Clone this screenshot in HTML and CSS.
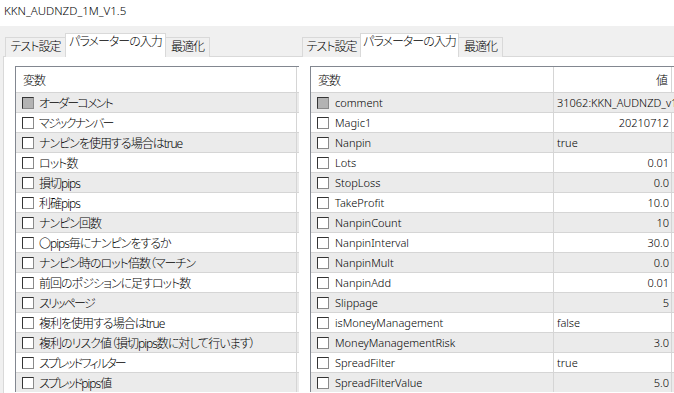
FILE: index.html
```html
<!DOCTYPE html>
<html lang="ja">
  <head>
    <meta charset="UTF-8" />
    <meta name="viewport" content="width=device-width, initial-scale=1.0" />
    <title>KKN_AUDNZD_1M_V1.5</title>
    <link rel="stylesheet" href="styles.css">
  </head>
  <body>
    <div class="title">KKN_AUDNZD_1M_V1.5</div>

    <div class="windows">
      <section class="tester tester-left">
        <div class="tabs">
          <div class="tab tab-test">テスト設定</div>
          <div class="tab tab-params active">パラメーターの入力</div>
          <div class="tab tab-opt">最適化</div>
        </div>
        <div class="panel">
          <div class="list">
            <div class="row head">
              <div class="cell name">変数</div>
              <div class="cell value"></div>
              <div class="cell rest"></div>
            </div>
            <div class="row odd"><div class="cell name"><span class="check mixed"></span><span class="kana">オーダーコメント</span></div><div class="cell value"></div><div class="cell rest"></div></div>
            <div class="row"><div class="cell name"><span class="check"></span><span class="kana">マジックナンバー</span></div><div class="cell value"></div><div class="cell rest"></div></div>
            <div class="row odd"><div class="cell name"><span class="check"></span>ナンピンを使用する場合はtrue</div><div class="cell value"></div><div class="cell rest"></div></div>
            <div class="row"><div class="cell name"><span class="check"></span>ロット数</div><div class="cell value"></div><div class="cell rest"></div></div>
            <div class="row odd"><div class="cell name"><span class="check"></span>損切pips</div><div class="cell value"></div><div class="cell rest"></div></div>
            <div class="row"><div class="cell name"><span class="check"></span>利確pips</div><div class="cell value"></div><div class="cell rest"></div></div>
            <div class="row odd"><div class="cell name"><span class="check"></span>ナンピン回数</div><div class="cell value"></div><div class="cell rest"></div></div>
            <div class="row"><div class="cell name"><span class="check"></span>〇pips毎にナンピンをするか</div><div class="cell value"></div><div class="cell rest"></div></div>
            <div class="row odd"><div class="cell name"><span class="check"></span>ナンピン時のロット倍数（マーチン</div><div class="cell value"></div><div class="cell rest"></div></div>
            <div class="row"><div class="cell name"><span class="check"></span>前回のポジションに足すロット数</div><div class="cell value"></div><div class="cell rest"></div></div>
            <div class="row odd"><div class="cell name"><span class="check"></span><span class="kana">スリッページ</span></div><div class="cell value"></div><div class="cell rest"></div></div>
            <div class="row"><div class="cell name"><span class="check"></span>複利を使用する場合はtrue</div><div class="cell value"></div><div class="cell rest"></div></div>
            <div class="row odd"><div class="cell name"><span class="check"></span>複利のリスク値（損切pips数に対して行います）</div><div class="cell value"></div><div class="cell rest"></div></div>
            <div class="row"><div class="cell name"><span class="check"></span><span class="kana">スプレッドフィルター</span></div><div class="cell value"></div><div class="cell rest"></div></div>
            <div class="row odd"><div class="cell name"><span class="check"></span><span class="kana">スプレッド</span>pips値</div><div class="cell value"></div><div class="cell rest"></div></div>
          </div>
        </div>
      </section>

      <section class="tester tester-right">
        <div class="tabs">
          <div class="tab tab-test">テスト設定</div>
          <div class="tab tab-params active">パラメーターの入力</div>
          <div class="tab tab-opt">最適化</div>
        </div>
        <div class="panel">
          <div class="list">
            <div class="row head">
              <div class="cell name">変数</div>
              <div class="cell value num">値</div>
              <div class="cell rest"></div>
            </div>
            <div class="row odd"><div class="cell name"><span class="check mixed"></span>comment</div><div class="cell value overflow">31062:KKN_AUDNZD_v1.5</div><div class="cell rest"></div></div>
            <div class="row"><div class="cell name"><span class="check"></span>Magic1</div><div class="cell value num">20210712</div><div class="cell rest"></div></div>
            <div class="row odd"><div class="cell name"><span class="check"></span>Nanpin</div><div class="cell value">true</div><div class="cell rest"></div></div>
            <div class="row"><div class="cell name"><span class="check"></span>Lots</div><div class="cell value num">0.01</div><div class="cell rest"></div></div>
            <div class="row odd"><div class="cell name"><span class="check"></span>StopLoss</div><div class="cell value num">0.0</div><div class="cell rest"></div></div>
            <div class="row"><div class="cell name"><span class="check"></span>TakeProfit</div><div class="cell value num">10.0</div><div class="cell rest"></div></div>
            <div class="row odd"><div class="cell name"><span class="check"></span>NanpinCount</div><div class="cell value num">10</div><div class="cell rest"></div></div>
            <div class="row"><div class="cell name"><span class="check"></span>NanpinInterval</div><div class="cell value num">30.0</div><div class="cell rest"></div></div>
            <div class="row odd"><div class="cell name"><span class="check"></span>NanpinMult</div><div class="cell value num">0.0</div><div class="cell rest"></div></div>
            <div class="row"><div class="cell name"><span class="check"></span>NanpinAdd</div><div class="cell value num">0.01</div><div class="cell rest"></div></div>
            <div class="row odd"><div class="cell name"><span class="check"></span>Slippage</div><div class="cell value num">5</div><div class="cell rest"></div></div>
            <div class="row"><div class="cell name"><span class="check"></span>isMoneyManagement</div><div class="cell value">false</div><div class="cell rest"></div></div>
            <div class="row odd"><div class="cell name"><span class="check"></span>MoneyManagementRisk</div><div class="cell value num">3.0</div><div class="cell rest"></div></div>
            <div class="row"><div class="cell name"><span class="check"></span>SpreadFilter</div><div class="cell value">true</div><div class="cell rest"></div></div>
            <div class="row odd"><div class="cell name"><span class="check"></span>SpreadFilterValue</div><div class="cell value num">5.0</div><div class="cell rest"></div></div>
          </div>
        </div>
      </section>
    </div>
  </body>
</html>
```

FILE: styles.css
```css
* {
  margin: 0;
  padding: 0;
  box-sizing: border-box;
}

html,
body {
  width: 674px;
  height: 393px;
  overflow: hidden;
}

body {
  background: #ffffff;
  color: #000000;
  font-family: "Noto Sans", "Noto Sans CJK JP", sans-serif;
  font-size: 11px;
  font-weight: 300;
  font-feature-settings: "palt";
}

.title {
  height: 26px;
  padding: 2px 0 0 4px;
  line-height: 18px;
  font-size: 11.5px;
  background: #ffffff;
}

.windows {
  display: flex;
  height: 367px;
  background: #f0f0f0;
}

.tester {
  display: flex;
  flex-direction: column;
  overflow: hidden;
}

.tester-left {
  width: 299px;
  padding-left: 3px;
}

.tester-right {
  flex: 1;
}

/* tab strip */
.tabs {
  display: flex;
  align-items: flex-end;
  height: 30px;
  position: relative;
  z-index: 1;
}

.tester-left .tabs {
  padding-left: 2px;
}

.tester-right .tabs {
  padding-left: 3px;
}

.tab {
  height: 20px;
  margin-bottom: -1px;
  border: 1px solid #d9d9d9;
  border-bottom: none;
  background: #f0f0f0;
  font-size: 12px;
  letter-spacing: -1px;
  line-height: 18px;
  text-align: center;
  white-space: nowrap;
}

.tab + .tab {
  margin-left: -1px;
}

.tab.active {
  height: 24px;
  background: #ffffff;
  line-height: 16px;
}

.tab-test {
  width: 61px;
}

.tab-params {
  width: 101px;
}

.tab-opt {
  width: 45px;
}

.tester-right .tab-test {
  width: 59px;
}

.tester-right .tab-params {
  width: 99px;
}

/* white panel under the tabs */
.panel {
  flex: 1;
  background: #ffffff;
  border-top: 1px solid #d9d9d9;
  border-left: 1px solid #d9d9d9;
  padding: 9px 0 0 11px;
  overflow: hidden;
}

.tester-right .panel {
  border-left: none;
}

.list {
  width: 600px;
  border-top: 1px solid #828790;
  border-left: 1px solid #828790;
}

.row {
  display: flex;
  height: 20px;
  border-top: 1px solid #d5d5d5;
  background: #ffffff;
}

.row.odd {
  background: #ebebeb;
}

.row.head {
  height: 25px;
  border-top: none;
}

.cell {
  display: flex;
  align-items: center;
  height: 100%;
  white-space: nowrap;
  overflow: hidden;
}

.cell.name {
  width: 281px;
  padding-left: 6px;
  border-right: 1px solid #d5d5d5;
}

.tester-left .cell.name,
.head .cell {
  font-size: 12px;
  letter-spacing: -1px;
}

/* katakana runs are set narrower on the original screen */
.kana {
  letter-spacing: -1.8px;
}

.head .cell.name {
  padding-left: 7px;
}

.tester-right .cell.name {
  width: 243px;
}

.cell.value {
  width: 118px;
  padding: 0 2px 0 3px;
  border-right: 1px solid #d5d5d5;
}

.cell.value.num {
  justify-content: flex-end;
}

.head .cell.value.num {
  padding-right: 4px;
}

.cell.value.overflow {
  width: 240px;
  border-right: none;
}

.cell.rest {
  flex: 1;
}

.check {
  flex: none;
  width: 12px;
  height: 12px;
  margin-right: 6px;
  border: 1px solid #333333;
  border-right-color: #8a8a8a;
  border-bottom-color: #8a8a8a;
  background: #ffffff;
}

.tester-left .check {
  margin-right: 5px;
}

.check.mixed {
  background: #b3b3b3;
}
```
